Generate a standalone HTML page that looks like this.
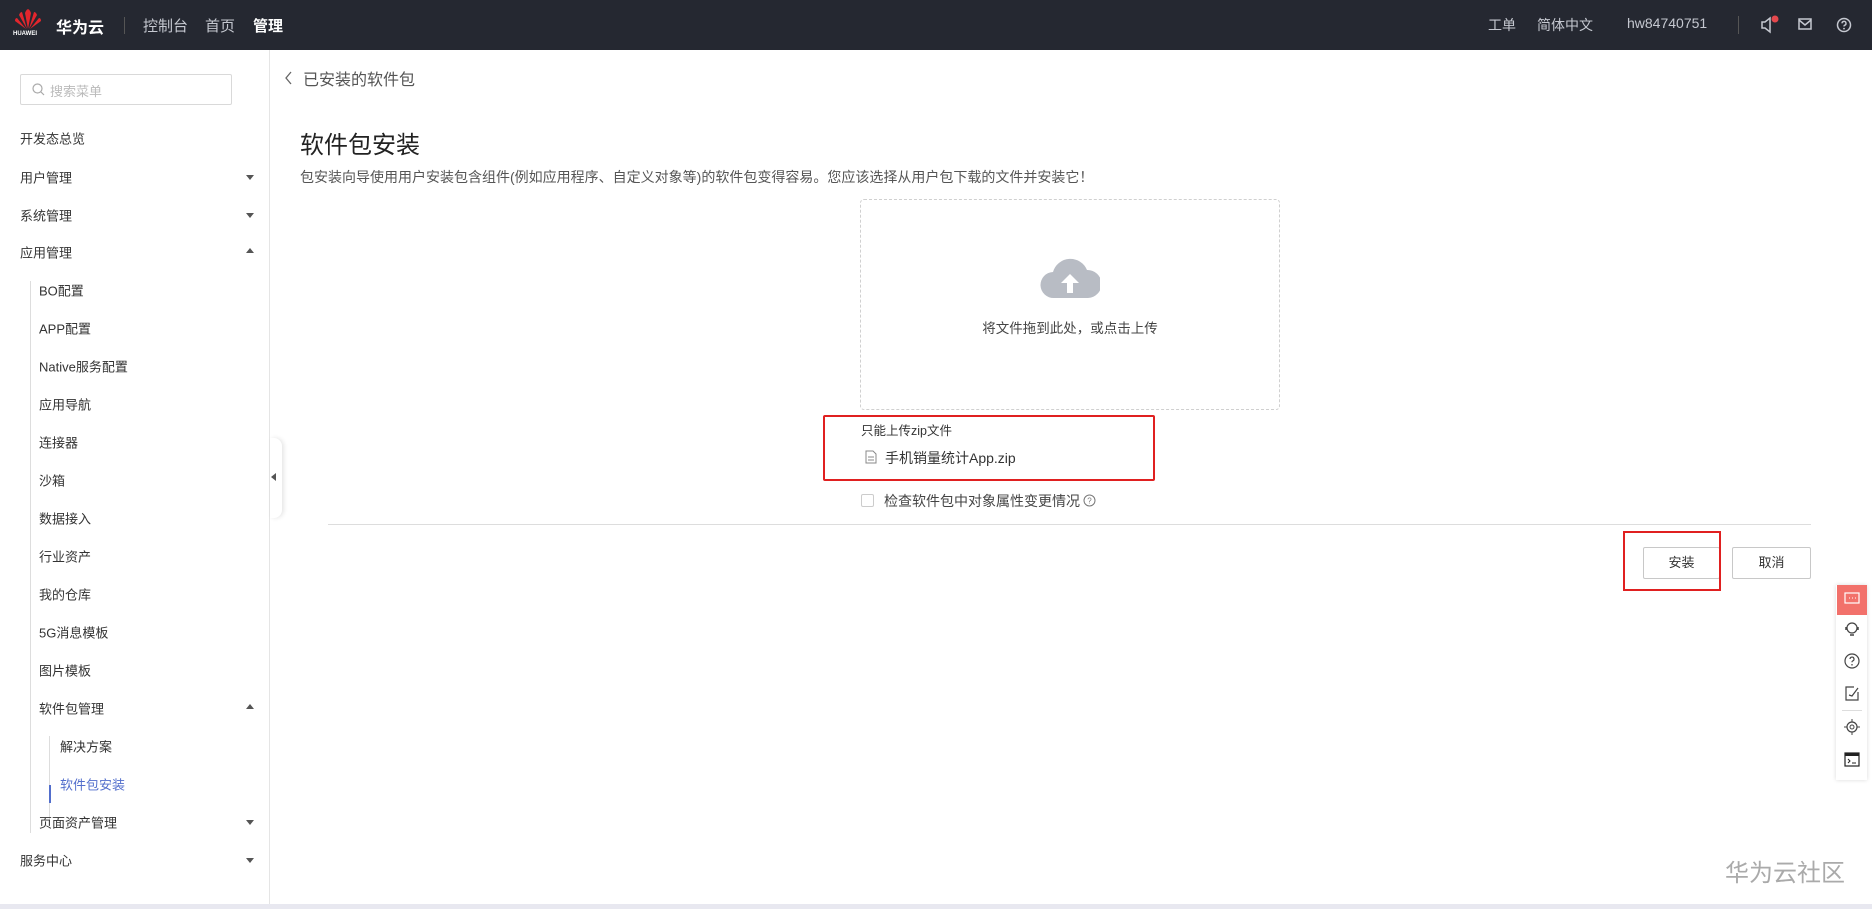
<!DOCTYPE html>
<html><head><meta charset="utf-8"><style>
*{margin:0;padding:0;box-sizing:border-box}
body{width:1872px;height:909px;overflow:hidden;background:#fff;font-family:"Liberation Sans","Noto Sans CJK SC",sans-serif;position:relative;color:#252b3a}
.a{position:absolute;white-space:nowrap}
.hd{position:absolute;left:0;top:0;width:1872px;height:50px;background:#252831;color:#c5c8d0;font-size:15px}
.side{position:absolute;left:0;top:50px;width:270px;height:854px;border-right:1px solid #e5e5e5}
.mi{position:absolute;font-size:13px;color:#333;transform:translateY(-50%)}
.ar{position:absolute;left:246px;width:0;height:0;border-left:4px solid transparent;border-right:4px solid transparent}
.dn{border-top:5px solid #555}.up{border-bottom:5px solid #555}
.btn{position:absolute;height:32px;border:1px solid #c8c8c8;border-radius:2px;font-size:13px;color:#333;text-align:center;line-height:30px;background:#fff}
</style></head><body>
<div class="hd">
  <svg class="a" style="left:14px;top:9px" width="28" height="22" viewBox="0 0 28 22"><g fill="#e3262d"><path d="M14 20 L11 4 Q12 1 14 0 Z"/><path d="M14 20 L17 4 Q16 1 14 0 Z"/><path d="M13 20 L5 6 Q6 3 8 3 Z"/><path d="M15 20 L23 6 Q22 3 20 3 Z"/><path d="M12 20 L1 12 Q1 9 3 9 Z"/><path d="M16 20 L27 12 Q27 9 25 9 Z"/></g></svg>
  <div class="a" style="left:13px;top:31px;font-size:6px;color:#fff;font-weight:bold">HUAWEI</div>
  <div class="a" style="left:56px;top:14px;font-size:16px;color:#fff;font-weight:bold">华为云</div>
  <div class="a" style="left:124px;top:17px;width:1px;height:17px;background:#555"></div>
  <div class="a" style="left:143px;top:15px">控制台</div>
  <div class="a" style="left:205px;top:15px">首页</div>
  <div class="a" style="left:253px;top:15px;color:#fff;font-weight:bold">管理</div>
  <div class="a" style="left:1488px;top:15px;font-size:14px">工单</div>
  <div class="a" style="left:1537px;top:15px;font-size:14px">简体中文</div>
  <div class="a" style="left:1627px;top:15px;font-size:14px">hw84740751</div>
  <div class="a" style="left:1738px;top:16px;width:1px;height:18px;background:#555"></div>
  <svg class="a" style="left:1760px;top:15px" width="22" height="20" viewBox="0 0 22 20"><path d="M2 7h3l5-4v14l-5-4H2z" fill="none" stroke="#c5c8d0" stroke-width="1.5"/><circle cx="15" cy="4" r="3.5" fill="#e5484d"/></svg>
  <svg class="a" style="left:1798px;top:18px" width="14" height="12" viewBox="0 0 14 12"><rect x="1" y="1" width="12" height="10" fill="none" stroke="#c5c8d0" stroke-width="1.5"/><path d="M1 2l6 5 6-5" fill="none" stroke="#c5c8d0" stroke-width="1.5"/></svg>
  <svg class="a" style="left:1836px;top:17px" width="16" height="16" viewBox="0 0 16 16"><circle cx="8" cy="8" r="6.5" fill="none" stroke="#c5c8d0" stroke-width="1.5"/><path d="M6 6.3a2 2 0 1 1 2.5 2c-.5.2-.5.6-.5 1.2" fill="none" stroke="#c5c8d0" stroke-width="1.4"/><circle cx="8" cy="11.6" r=".9" fill="#c5c8d0"/></svg>
</div>
<div class="side">
  <div class="a" style="left:20px;top:24px;width:212px;height:31px;border:1px solid #d9d9d9;border-radius:2px"></div>
  <svg class="a" style="left:32px;top:33px" width="13" height="13" viewBox="0 0 13 13"><circle cx="5.5" cy="5.5" r="4.5" fill="none" stroke="#aaa" stroke-width="1.2"/><path d="M9 9l3 3" stroke="#aaa" stroke-width="1.2"/></svg>
  <div class="a" style="left:50px;top:31px;font-size:13px;color:#bbb">搜索菜单</div>
  <div class="a" style="left:30px;top:231px;width:1px;height:552px;background:#ddd"></div>
  <div class="a" style="left:49px;top:686px;width:1px;height:86px;background:#ddd"></div>
  <div class="a" style="left:49px;top:735px;width:2px;height:18px;background:#526ecc"></div>
</div>
<div class="mi" style="left:20px;top:138px">开发态总览</div>
<div class="mi" style="left:20px;top:177px">用户管理</div><div class="ar dn" style="top:175px"></div>
<div class="mi" style="left:20px;top:215px">系统管理</div><div class="ar dn" style="top:213px"></div>
<div class="mi" style="left:20px;top:252px">应用管理</div><div class="ar up" style="top:248px"></div>
<div class="mi" style="left:39px;top:290px">BO配置</div>
<div class="mi" style="left:39px;top:328px">APP配置</div>
<div class="mi" style="left:39px;top:366px">Native服务配置</div>
<div class="mi" style="left:39px;top:404px">应用导航</div>
<div class="mi" style="left:39px;top:442px">连接器</div>
<div class="mi" style="left:39px;top:480px">沙箱</div>
<div class="mi" style="left:39px;top:518px">数据接入</div>
<div class="mi" style="left:39px;top:556px">行业资产</div>
<div class="mi" style="left:39px;top:594px">我的仓库</div>
<div class="mi" style="left:39px;top:632px">5G消息模板</div>
<div class="mi" style="left:39px;top:670px">图片模板</div>
<div class="mi" style="left:39px;top:708px">软件包管理</div><div class="ar up" style="top:704px"></div>
<div class="mi" style="left:60px;top:746px">解决方案</div>
<div class="mi" style="left:60px;top:784px;color:#526ecc">软件包安装</div>
<div class="mi" style="left:39px;top:822px">页面资产管理</div><div class="ar dn" style="top:820px"></div>
<div class="mi" style="left:20px;top:860px">服务中心</div><div class="ar dn" style="top:858px"></div>
<div class="a" style="left:270px;top:438px;width:12px;height:80px;background:#fff;border-radius:0 8px 8px 0;box-shadow:2px 0 4px rgba(0,0,0,.1)"></div>
<div class="a" style="left:271px;top:473px;border-right:5px solid #555;border-top:4px solid transparent;border-bottom:4px solid transparent"></div>
<div class="a" style="left:0;top:904px;width:1872px;height:5px;background:#e8e8f0"></div>

<svg class="a" style="left:284px;top:70px" width="10" height="16" viewBox="0 0 10 16"><path d="M7 2L2 8l5 6" fill="none" stroke="#666" stroke-width="1.3"/></svg>
<div class="a" style="left:303px;top:66px;font-size:16px;color:#555">已安装的软件包</div>
<div class="a" style="left:300px;top:125px;font-size:24px;color:#222">软件包安装</div>
<div class="a" style="left:300px;top:167px;font-size:14px;color:#555">包安装向导使用用户安装包含组件(例如应用程序、自定义对象等)的软件包变得容易。您应该选择从用户包下载的文件并安装它！</div>
<div class="a" style="left:860px;top:199px;width:420px;height:211px;border:1px dashed #d0d0d0;border-radius:4px"></div>
<svg class="a" style="left:1040px;top:252px" width="60" height="48" viewBox="0 0 60 48"><path d="M14 46a13 13 0 0 1-1-26 18 18 0 0 1 34-2 14 14 0 0 1 1 28z" fill="#b8bcc4"/><path d="M30 22l-9 9h6v10h6V31h6z" fill="#fff"/></svg>
<div class="a" style="left:860px;top:317px;width:420px;text-align:center;font-size:13.5px;color:#444">将文件拖到此处，或点击上传</div>
<div class="a" style="left:823px;top:415px;width:332px;height:66px;border:2px solid #e02020;border-radius:2px"></div>
<div class="a" style="left:861px;top:420px;font-size:12.5px;color:#333">只能上传zip文件</div>
<svg class="a" style="left:865px;top:450px" width="12" height="14" viewBox="0 0 12 14"><path d="M1 1h7l3 3v9H1z" fill="none" stroke="#888"/><path d="M3 7h6M3 10h6" stroke="#888"/></svg>
<div class="a" style="left:885px;top:448px;font-size:14px;color:#333">手机销量统计App.zip</div>
<div class="a" style="left:861px;top:494px;width:13px;height:13px;border:1px solid #ccc;border-radius:2px"></div>
<div class="a" style="left:884px;top:491px;font-size:14px;color:#444">检查软件包中对象属性变更情况</div>
<svg class="a" style="left:1083px;top:494px" width="13" height="13" viewBox="0 0 13 13"><circle cx="6.5" cy="6.5" r="5.5" fill="none" stroke="#777"/><text x="6.5" y="9.5" font-size="8" text-anchor="middle" fill="#777" font-family="Liberation Sans">?</text></svg>
<div class="a" style="left:328px;top:524px;width:1483px;height:1px;background:#ddd"></div>
<div class="btn" style="left:1643px;top:547px;width:77px">安装</div>
<div class="a" style="left:1623px;top:531px;width:98px;height:60px;border:2px solid #e02020"></div>
<div class="btn" style="left:1732px;top:547px;width:79px">取消</div>
<div class="a" style="left:1836px;top:585px;width:31px;height:195px;background:#fff;box-shadow:0 0 4px rgba(0,0,0,.15)"></div>
<div class="a" style="left:1837px;top:585px;width:30px;height:30px;background:#f2716b"></div>
<svg class="a" style="left:1844px;top:592px" width="16" height="14" viewBox="0 0 16 14"><rect x="1" y="1" width="14" height="10" fill="none" stroke="#fff" stroke-width="1.2"/><path d="M5 6h1M8 6h1M11 6h1" stroke="#fff"/></svg>
<svg class="a" style="left:1844px;top:621px" width="16" height="16" viewBox="0 0 16 16"><circle cx="8" cy="7" r="5" fill="none" stroke="#444" stroke-width="1.2"/><path d="M2 6v3M14 6v3M6 14h4" stroke="#444" stroke-width="1.5"/></svg>
<svg class="a" style="left:1844px;top:653px" width="16" height="16" viewBox="0 0 16 16"><circle cx="8" cy="8" r="7" fill="none" stroke="#444" stroke-width="1.2"/><path d="M6 6a2 2 0 1 1 2.5 2c-.5.2-.5.6-.5 1.2" fill="none" stroke="#444" stroke-width="1.2"/><circle cx="8" cy="11.8" r=".8" fill="#444"/></svg>
<svg class="a" style="left:1845px;top:685px" width="15" height="16" viewBox="0 0 15 16"><path d="M9 2H1v13h12V7" fill="none" stroke="#444" stroke-width="1.2"/><path d="M4 10l3 1 6-8" fill="none" stroke="#444" stroke-width="1.2"/></svg>
<div class="a" style="left:1842px;top:710px;width:20px;height:1px;background:#ddd"></div>
<svg class="a" style="left:1844px;top:719px" width="16" height="16" viewBox="0 0 16 16"><circle cx="8" cy="8" r="5" fill="none" stroke="#444" stroke-width="1.2"/><circle cx="8" cy="8" r="2" fill="none" stroke="#444"/><path d="M8 0v3M8 13v3M0 8h3M13 8h3" stroke="#444"/></svg>
<svg class="a" style="left:1844px;top:752px" width="16" height="15" viewBox="0 0 16 15"><rect x="1" y="1" width="14" height="13" fill="none" stroke="#222" stroke-width="1.2"/><rect x="1" y="1" width="14" height="3" fill="#222"/><path d="M4 7l2 2-2 2M8 11h4" fill="none" stroke="#222"/></svg>
<div class="a" style="left:1725px;top:853px;font-size:24px;color:#aaa">华为云社区</div>
</body></html>
